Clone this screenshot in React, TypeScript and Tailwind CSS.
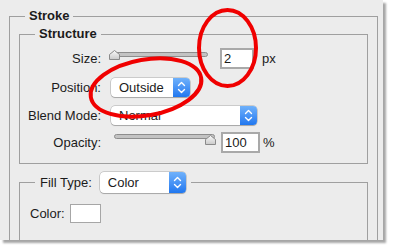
import type { ReactNode } from 'react'

function Arrows() {
  return (
    <span className="flex w-[17px] shrink-0 items-center justify-center rounded-r-[4px] bg-linear-to-b from-[#6fb1fb] to-[#1f77ef]">
      <svg width="9" height="13" viewBox="0 0 9 13" fill="none" stroke="white" strokeWidth="1.4" strokeLinecap="round" strokeLinejoin="round">
        <path d="M1.5 4.5 L4.5 1.5 L7.5 4.5" />
        <path d="M1.5 8.5 L4.5 11.5 L7.5 8.5" />
      </svg>
    </span>
  )
}

function Select({ value, className }: { value: string; className: string }) {
  return (
    <div
      className={`flex items-stretch rounded-[4px] bg-white shadow-[0_0_0_0.5px_rgba(0,0,0,0.28),0_1px_1px_rgba(0,0,0,0.18)] ${className}`}
    >
      <span className="flex flex-1 items-center pl-[8px] leading-none">{value}</span>
      <Arrows />
    </div>
  )
}

function Thumb() {
  return (
    <svg width="11" height="10" viewBox="0 0 11 10">
      <defs>
        <linearGradient id="thumb" x1="0" y1="0" x2="0" y2="1">
          <stop offset="0" stopColor="#fafafa" />
          <stop offset="1" stopColor="#c9c9c9" />
        </linearGradient>
      </defs>
      <path d="M5.5 0.5 L10.5 4.5 L10.5 9.5 L0.5 9.5 L0.5 4.5 Z" fill="url(#thumb)" stroke="#8a8a8a" strokeWidth="1" />
    </svg>
  )
}

function Track({ className }: { className: string }) {
  return <div className={`absolute h-[5px] rounded-full border border-[#8d8d8d] bg-[#c3c3c3] ${className}`} />
}

function NumberBox({ value, className }: { value: string; className: string }) {
  return (
    <div className={`flex h-[21px] items-center border-2 border-[#a9a9a9] bg-white pl-[2px] leading-none ${className}`}>
      {value}
    </div>
  )
}

function Row({ label, className, children }: { label: string; className: string; children: ReactNode }) {
  return (
    <div className={`flex items-center ${className}`}>
      <span className="w-[81px] shrink-0 text-right leading-none">{label}</span>
      {children}
    </div>
  )
}

export default function App() {
  return (
    <div className="relative h-[248px] w-[393px] overflow-hidden bg-white font-['Liberation_Sans',Arial,sans-serif] text-[13px] text-[#1b1b1b]">
      <div className="h-[240px] w-[383px] overflow-hidden bg-[#ececec] shadow-[3px_3px_2px_rgba(0,0,0,0.35)]">
        <fieldset className="mt-[8px] ml-[9px] h-[300px] w-[369px] border border-[#9f9f9f]">
          <legend className="ml-[15px] px-1 leading-[16px] font-bold">Stroke</legend>

          <fieldset className="mt-[2px] ml-[9px] w-[349px] border border-[#9f9f9f] pb-[10px]">
            <legend className="ml-[15px] px-1 leading-[16px] font-bold">Structure</legend>

            <Row label="Size:" className="mt-[6px] h-[21px]">
              <div className="relative ml-[8px] h-[21px] w-[100px]">
                <Track className="top-[4px] right-[1px] left-[2px]" />
                <div className="absolute top-[2px] left-0 flex">
                  <Thumb />
                </div>
              </div>
              <NumberBox value="2" className="ml-[11px] w-[34px]" />
              <span className="ml-[8px] leading-none">px</span>
            </Row>

            <Row label="Position:" className="mt-[9px] h-[19px]">
              <Select value="Outside" className="ml-[10px] h-[19px] w-[79px]" />
            </Row>

            <Row label="Blend Mode:" className="mt-[9px] h-[19px]">
              <Select value="Normal" className="ml-[10px] h-[19px] w-[146px]" />
            </Row>

            <Row label="Opacity:" className="mt-[7px] h-[21px]">
              <div className="relative ml-[10px] h-[21px] w-[105px]">
                <Track className="top-[2px] right-[1px] left-[3px]" />
                <div className="absolute top-[3px] right-0 flex">
                  <Thumb />
                </div>
              </div>
              <NumberBox value="100" className="ml-[5px] w-[39px]" />
              <span className="ml-[3px] leading-none">%</span>
            </Row>
          </fieldset>

          <fieldset className="mt-[7px] ml-[9px] h-[120px] w-[349px] border border-[#9f9f9f]">
            <legend className="ml-[15px] px-[5px]">
              <span className="flex h-[22px] items-center">
                <span className="leading-none">Fill Type:</span>
                <Select value="Color" className="ml-[8px] h-[21px] w-[86px]" />
              </span>
            </legend>
            <div className="mt-[11px] flex items-center pl-[10px]">
              <span className="leading-none">Color:</span>
              <div className="ml-[5px] h-[19px] w-[31px] border border-[#a6a6a6] bg-white" />
            </div>
          </fieldset>
        </fieldset>
      </div>

      <svg className="pointer-events-none absolute inset-0" width="393" height="248" viewBox="0 0 393 248" fill="none">
        <ellipse cx="227.5" cy="48" rx="28.5" ry="38" stroke="#f00000" strokeWidth="4" />
        <ellipse cx="146" cy="87.5" rx="56" ry="28" transform="rotate(-10 146 87.5)" stroke="#f00000" strokeWidth="4" />
      </svg>
    </div>
  )
}
